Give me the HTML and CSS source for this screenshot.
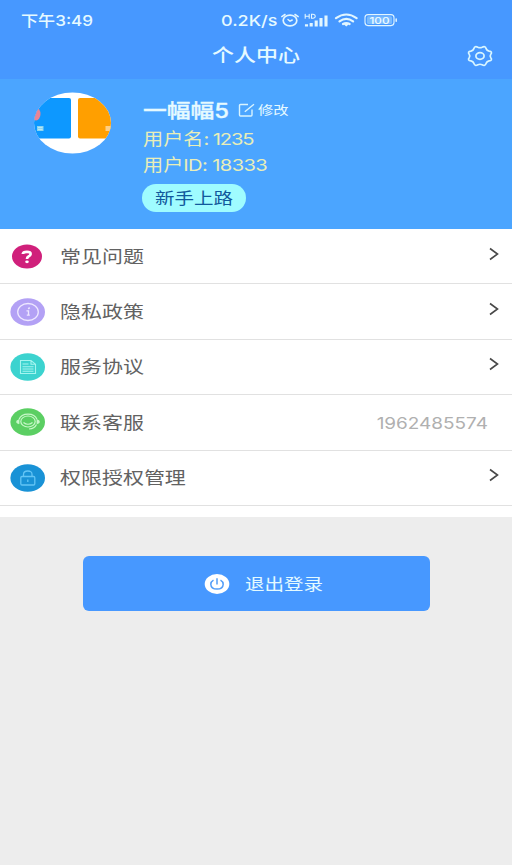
FILE: index.html
```html
<!DOCTYPE html>
<html lang="zh-CN">
<head>
<meta charset="utf-8">
<title>个人中心</title>
<link rel="stylesheet" href="styles.css">
</head>
<body>
<header class="top">
  <div class="status">
    <span class="wide time">下午3:49</span>
    <span class="wide speed">0.2K/s</span>
    <svg class="sys" width="120" height="20" viewBox="0 0 120 20" fill="none" stroke="#e2f6ff" stroke-width="1.5" stroke-linecap="round">
      <ellipse cx="13" cy="10.500" rx="6.800" ry="5.400" stroke-width="1.700"/><path stroke-width="1.500" d="M11 9.500 13 11.200 15.200 10M4.800 6.600 8 4.500M21.200 6.600 18 4.500"/>
      <path stroke-width="1.1" d="M28.2 4.2v4M32.2 4.2v4M28.2 6.2h4M34.5 4.2v4h1.6q2.2-.3 2.2-2t-2.2-2z"/>
      <path stroke-width="3.100" stroke-linecap="butt" d="M29.500 16.500v-2.200M34.200 16.500V13M39.200 16.500V10.500M44 16.500V8M49 16.500V5.500"/>
      <path stroke-width="2.200" d="M59 8.200Q69.300.8 79.600 8.200M62.500 11.300q6.800-4.900 13.600 0M66 14q3.300-2 6.600 0"/><path fill="#e2f6ff" stroke="none" d="M66.700 14.200q2.600-1.600 5.200 0l-2.600 2.400z"/>
      <rect x="88" y="4.600" width="29" height="11" rx="3" stroke-width="1.1"/><rect x="90" y="6.200" width="25" height="7.800" rx="1.500" fill="#79bbff" stroke="none"/><path d="M119.200 9v2.200"/>
      <text x="92.500" y="13.500" textLength="20" lengthAdjust="spacingAndGlyphs" class="charge">100</text>
    </svg>
  </div>
  <div class="titlebar">
    <h1 class="title"><span class="wide">个人中心</span></h1>
    <svg class="gear" width="26" height="22" viewBox="-13 -11 26 22" fill="none" stroke="#d9f6ff" stroke-width="1.7" stroke-linejoin="round">
      <path d="M10.800 1.700Q12.800 4.300 9.100 4.900Q6.800 5.500 6.100 7.400Q5.300 10.400 2.100 8.700Q0 7.800-2.100 8.700Q-5.300 10.400-6.100 7.400Q-6.800 5.500-9.100 4.900Q-12.800 4.300-10.800 1.700Q-9.600 0-10.800-1.700Q-12.800-4.300-9.100-4.900Q-6.800-5.500-6.100-7.400Q-5.300-10.400-2.100-8.700Q0-7.800 2.100-8.700Q5.300-10.400 6.100-7.400Q6.800-5.500 9.100-4.900Q12.800-4.300 10.800-1.700Q9.600 0 10.800 1.700Z"/><ellipse rx="4.100" ry="3.300"/>
    </svg>
  </div>
</header>
<section class="profile">
  <svg class="avatar" width="78" height="62" viewBox="0 0 78 62">
    <defs><clipPath id="face"><ellipse cx="38.500" cy="31" rx="38.500" ry="30.500"/></clipPath></defs>
    <g clip-path="url(#face)"><rect width="78" height="62" fill="#fff"/><rect x="-10" y="6" width="47" height="40.500" rx="2" fill="#0d98ff"/><rect x="44" y="6" width="50" height="40.500" rx="2" fill="#ff9f00"/><ellipse cx="2" cy="22" rx="4.500" ry="6.500" fill="#e88497"/><path d="M3 34h6.500v5H3z" fill="#8bd4ef"/><path d="M4 35.500h4.500M4 37.500h4.500" stroke="#b6e6f6"/><path d="M71.500 34h6v5h-6z" fill="#ffcf84"/></g>
  </svg>
  <div class="info">
    <div class="name-row">
      <span class="wide name">一幅幅5</span>
      <svg class="edit" width="18" height="14" viewBox="0 0 18 14" fill="none" stroke="#d8f4ff" stroke-width="1.4" stroke-linejoin="round"><path d="M10 1.500H2.500Q1.500 1.500 1.500 2.500V12Q1.500 13 2.500 13H13Q14 13 14 12V6.500M6.800 8.800 16 1.200"/></svg>
      <span class="wide modify">修改</span>
    </div>
    <div class="meta"><span class="wide">用户名<span class="num tight">: 1235</span></span></div>
    <div class="meta"><span class="wide">用户<span class="num">ID: 18333</span></span></div>
    <div class="badge"><span class="wide">新手上路</span></div>
  </div>
</section>
<main class="list">
  <div class="row">
    <svg class="icon" width="36" height="28" viewBox="0 0 36 28"><ellipse cx="17" cy="14.500" rx="15" ry="12" fill="#d0207b"/><path d="M12.800 12Q13 9.800 17 9.800T20.500 12.200Q20.500 13.700 18.500 14.500 17 15.200 17 17" fill="none" stroke="#fff" stroke-width="2.700"/><ellipse cx="17" cy="19.800" rx="1.800" ry="1.400" fill="#fff"/></svg>
    <span class="wide label">常见问题</span>
    <svg class="arrow" width="12" height="14" viewBox="0 0 12 14"><path d="M2 1.500 9.500 7 2 12.500"/></svg>
  </div>
  <div class="row">
    <svg class="icon" width="36" height="28" viewBox="0 0 36 28" fill="none" stroke="#eee8ff"><ellipse cx="17.700" cy="14" rx="17.300" ry="13.800" fill="#b3a1f5" stroke="none"/><ellipse cx="18" cy="14" rx="10.300" ry="8.500" stroke-width="1.300"/><path d="M16.500 12.800h2v4.200M16.800 17.200h3" stroke-width="1.300"/><path d="M18.200 10.900 19.700 9.700" stroke-width="1.500"/></svg>
    <span class="wide label">隐私政策</span>
    <svg class="arrow" width="12" height="14" viewBox="0 0 12 14"><path d="M2 1.500 9.500 7 2 12.500"/></svg>
  </div>
  <div class="row">
    <svg class="icon" width="36" height="28" viewBox="0 0 36 28" fill="none" stroke="#a5f5ef"><ellipse cx="17.700" cy="14" rx="17.300" ry="13.800" fill="#3cd3cf" stroke="none"/><path d="M10.500 7.500H21l4.500 3.700V20.500h-15zM21 7.500v3.700h4.500M12.500 11h6M12.500 13.700h11M12.500 16h11M12.500 18.200h11" stroke-width="1.100"/></svg>
    <span class="wide label">服务协议</span>
    <svg class="arrow" width="12" height="14" viewBox="0 0 12 14"><path d="M2 1.500 9.500 7 2 12.500"/></svg>
  </div>
  <div class="row">
    <svg class="icon" width="36" height="28" viewBox="0 0 36 28" fill="none" stroke="#c9f8ca" stroke-width="1.200"><ellipse cx="17.700" cy="14" rx="17.300" ry="13.800" fill="#5bcf63" stroke="none"/><ellipse cx="18" cy="13.500" rx="7.200" ry="5.500"/><path d="M9 11.500Q11 6.200 18 6.200T27 11.500M13.500 14.500Q18 18 22.500 14.500M26.500 16.500Q24.500 20.800 19 21"/><path d="M9 11.800v4L6.800 14.800v-2zM27 11.800v4l2.200-1v-2z" fill="#c9f8ca" stroke-width=".8"/></svg>
    <span class="wide label">联系客服</span>
    <span class="wide phone">1962485574</span>
  </div>
  <div class="row">
    <svg class="icon" width="36" height="28" viewBox="0 0 36 28" fill="none" stroke="#64c5f5" stroke-width="1.300"><ellipse cx="17.700" cy="14" rx="17.300" ry="13.800" fill="#1992d6" stroke="none"/><rect x="10.800" y="12.500" width="14" height="8.500" rx="1.200"/><path d="M13.500 12.500V10.500Q13.500 7 17.800 7T22 10.500v2M17.800 15.500v2.500"/></svg>
    <span class="wide label">权限授权管理</span>
    <svg class="arrow" width="12" height="14" viewBox="0 0 12 14"><path d="M2 1.500 9.500 7 2 12.500"/></svg>
  </div>
</main>
<button class="logout" type="button">
  <svg width="26" height="22" viewBox="0 0 26 22"><ellipse cx="13" cy="11" rx="12.300" ry="10" fill="#fff"/><path d="M9.500 7.200Q6.800 8.800 6.800 11.200 7 16 13 16.100 19 16 19.200 11.200 19.200 8.800 16.500 7.200M13 5.200v6.300" fill="none" stroke="#529df8" stroke-width="1.500"/></svg>
  <span class="wide">退出登录</span>
</button>
</body>
</html>
```
FILE: styles.css
```css
* { box-sizing: border-box; }
body { margin: 0; min-height: 865px; background: #ededed; color: #626262; font-family: Inter, "Noto Sans CJK SC", sans-serif; }
svg { display: block; flex: none; }
/* Letterforms are wider than they are tall throughout the screen. */
.wide { display: inline-block; white-space: nowrap; transform: scaleX(1.22); transform-origin: left center; }
.top { height: 79px; background: #4798ff; color: #e6faff; }
.status { display: flex; align-items: center; height: 40px; padding-left: 21px; }
.time, .speed { padding-top: 1px; font-size: 15px; line-height: 20px; font-weight: 500; }
.time { width: 200px; transform: scaleX(1.14); }
.speed { width: 56px; transform: scaleX(1.2); }
.charge { font-size: 9px; font-weight: 500; fill: #f0fcff; stroke: none; }
.titlebar { display: flex; align-items: center; height: 32px; padding-left: 212px; }
.title { width: 255px; margin: 0; font-size: 18px; font-weight: 500; line-height: 30px; }
.profile { display: flex; height: 150px; background: #4ba5ff; }
.avatar { margin: 13px 0 0 34px; }
.info { margin: 17px 0 0 31px; }
.name-row { display: flex; align-items: center; height: 29px; color: #e6faff; }
.name { width: 95px; font-size: 19.5px; font-weight: 500; line-height: 28px; -webkit-text-stroke: .3px #e6faff; }
.edit { margin: -2px 2px 0 0; }
.modify { margin-top: -3px; font-size: 12.500px; }
.meta { height: 25.500px; color: #e8eeb8; font-size: 16.500px; line-height: 28px; }
.num { letter-spacing: -.5px; }
.tight { letter-spacing: -.9px; }
.badge { width: 104px; height: 28px; margin: 8px 0 0 -1px; padding-left: 13px; border-radius: 14px; background: #9ffcff; color: #11599c; font-size: 16px; line-height: 28px; }
.list { height: 288px; background: #fff; }
.row { display: flex; align-items: center; height: 55.400px; padding: 0 12px 0 10px; border-bottom: 1px solid #e1e1e1; }
.label { margin: 1px 0 0 14px; font-size: 17.200px; line-height: 26px; }
.arrow { margin: -5px 0 0 auto; fill: none; stroke: #484848; stroke-width: 1.600; }
.phone { margin: 2px 12px 0 auto; color: #b0b0b0; font-size: 16.500px; transform: scaleX(1.148); transform-origin: right center; }
.logout { display: flex; align-items: center; width: 347px; height: 55px; margin: 39px 0 0 83px; padding: 0 0 0 121px; border: 0; border-radius: 6px; background: #4798ff; color: #e4faff; font: 400 16px/24px Inter, "Noto Sans CJK SC", sans-serif; }
.logout .wide { margin-left: 15px; }
```
